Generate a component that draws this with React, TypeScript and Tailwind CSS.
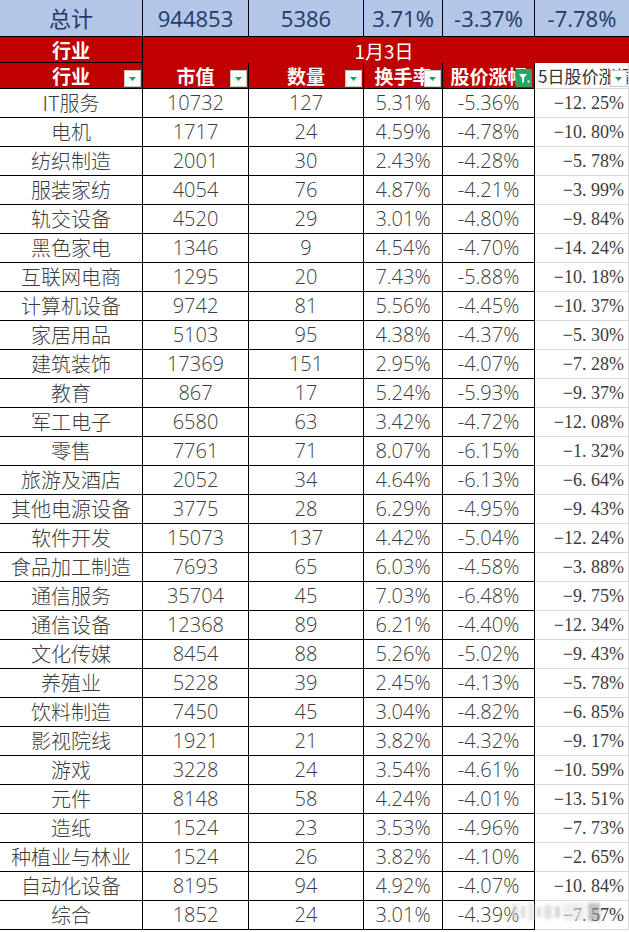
import React from "react";

type Row = [string, string, string, string, string, string];

const rows: Row[] = [
  ["IT服务", "10732", "127", "5.31%", "-5.36%", "−12. 25%"],
  ["电机", "1717", "24", "4.59%", "-4.78%", "−10. 80%"],
  ["纺织制造", "2001", "30", "2.43%", "-4.28%", "−5. 78%"],
  ["服装家纺", "4054", "76", "4.87%", "-4.21%", "−3. 99%"],
  ["轨交设备", "4520", "29", "3.01%", "-4.80%", "−9. 84%"],
  ["黑色家电", "1346", "9", "4.54%", "-4.70%", "−14. 24%"],
  ["互联网电商", "1295", "20", "7.43%", "-5.88%", "−10. 18%"],
  ["计算机设备", "9742", "81", "5.56%", "-4.45%", "−10. 37%"],
  ["家居用品", "5103", "95", "4.38%", "-4.37%", "−5. 30%"],
  ["建筑装饰", "17369", "151", "2.95%", "-4.07%", "−7. 28%"],
  ["教育", "867", "17", "5.24%", "-5.93%", "−9. 37%"],
  ["军工电子", "6580", "63", "3.42%", "-4.72%", "−12. 08%"],
  ["零售", "7761", "71", "8.07%", "-6.15%", "−1. 32%"],
  ["旅游及酒店", "2052", "34", "4.64%", "-6.13%", "−6. 64%"],
  ["其他电源设备", "3775", "28", "6.29%", "-4.95%", "−9. 43%"],
  ["软件开发", "15073", "137", "4.42%", "-5.04%", "−12. 24%"],
  ["食品加工制造", "7693", "65", "6.03%", "-4.58%", "−3. 88%"],
  ["通信服务", "35704", "45", "7.03%", "-6.48%", "−9. 75%"],
  ["通信设备", "12368", "89", "6.21%", "-4.40%", "−12. 34%"],
  ["文化传媒", "8454", "88", "5.26%", "-5.02%", "−9. 43%"],
  ["养殖业", "5228", "39", "2.45%", "-4.13%", "−5. 78%"],
  ["饮料制造", "7450", "45", "3.04%", "-4.82%", "−6. 85%"],
  ["影视院线", "1921", "21", "3.82%", "-4.32%", "−9. 17%"],
  ["游戏", "3228", "24", "3.54%", "-4.61%", "−10. 59%"],
  ["元件", "8148", "58", "4.24%", "-4.01%", "−13. 51%"],
  ["造纸", "1524", "23", "3.53%", "-4.96%", "−7. 73%"],
  ["种植业与林业", "1524", "26", "3.82%", "-4.10%", "−2. 65%"],
  ["自动化设备", "8195", "94", "4.92%", "-4.07%", "−10. 84%"],
  ["综合", "1852", "24", "3.01%", "-4.39%", "−7. 57%"],
];

function FilterBtn() {
  return (
    <div className="absolute right-[1px] bottom-[1px] w-[17px] h-[17px] bg-white border border-[#c8c8c8] flex items-center justify-center">
      <svg width="9" height="6" viewBox="0 0 9 6">
        <polygon points="1,1 8,1 4.5,5" fill="#1f9f63" />
      </svg>
    </div>
  );
}

function ActiveFilterBtn() {
  return (
    <div className="absolute right-[2px] bottom-[1px] w-[16px] h-[18px] bg-[#2aa465] flex items-center justify-center">
      <svg width="12" height="12" viewBox="0 0 12 12">
        <polygon points="1,2 9,2 6,6 6,10 4,11 4,6" fill="#ffffff" />
        <rect x="9.5" y="8.5" width="2" height="2" fill="#ffffff" />
      </svg>
    </div>
  );
}

export default function App() {
  const headers = ["行业", "市值", "数量", "换手率", "股价涨幅"];
  return (
    <div className="w-[629px] h-[932px] bg-white overflow-hidden relative">
      <div className="grid grid-cols-[143px_106px_115px_79px_92px_94px]">
        {["总计", "944853", "5386", "3.71%", "-3.37%", "-7.78%"].map((t, i) => (
          <div
            key={"t" + i}
            className={`h-[37px] bg-[#b4c6e7] border-b border-black ${i < 5 ? "border-r" : ""} flex items-center justify-center leading-none text-[22px] text-[#1f3a68] font-['Open_Sans','Noto_Sans_CJK_SC',sans-serif]`}
          >
            {t}
          </div>
        ))}

        <div className="h-[26px] bg-[#c00000] border-r border-b border-black flex items-center justify-center leading-none text-white font-bold text-[19px] font-['Noto_Sans_CJK_SC',sans-serif]">
          行业
        </div>
        <div className="col-span-5 h-[26px] bg-[#c00000] flex items-center justify-center leading-none text-white text-[19px] pr-[4px] font-['Noto_Sans_CJK_SC',sans-serif]">
          1月3日
        </div>

        {headers.map((h, i) => (
          <div
            key={"h" + i}
            className="relative h-[26px] bg-[#c00000] border-r border-b border-black flex items-center justify-center leading-none text-white font-bold text-[19px] overflow-hidden font-['Noto_Sans_CJK_SC',sans-serif]"
          >
            <span className="whitespace-nowrap">{h}</span>
            {i === 4 ? <ActiveFilterBtn /> : <FilterBtn />}
          </div>
        ))}
        <div className="relative h-[26px] bg-white border-b border-r border-[#d6d6d6] flex items-center leading-none pl-[3px] text-[17px] text-[#333333] overflow-hidden font-['Noto_Sans_CJK_SC',sans-serif]">
          <span className="whitespace-nowrap">5日股价涨幅</span>
          <FilterBtn />
        </div>

        {rows.map((r, ri) =>
          r.map((c, ci) =>
            ci === 0 ? (
              <div
                key={ri + "-" + ci}
                className="h-[29px] border-r border-b border-black flex items-center justify-center leading-none text-[20px] text-[#3c3c3c] font-light whitespace-nowrap font-['Noto_Sans_CJK_SC',sans-serif]"
              >
                {c}
              </div>
            ) : ci < 5 ? (
              <div
                key={ri + "-" + ci}
                className="h-[29px] border-r border-b border-black flex items-center justify-center leading-none text-[20px] text-[#3c3c3c] font-light whitespace-nowrap font-['Open_Sans','Noto_Sans_CJK_SC',sans-serif]"
              >
                {c}
              </div>
            ) : (
              <div
                key={ri + "-" + ci}
                className="h-[29px] border-r border-b border-[#dadada] flex items-center justify-end leading-none pr-[4px] text-[18px] text-[#3a3a3a] whitespace-pre font-['Liberation_Serif','Noto_Sans_CJK_SC',serif]"
              >
                {c}
              </div>
            )
          )
        )}
      </div>

      <div className="absolute left-[512px] top-[900px] w-[110px] h-[24px] flex items-center gap-[3px] blur-[1.5px] opacity-60 pointer-events-none">
        <div className="w-[6px] h-[16px] bg-[#cfcfcf]" />
        <div className="w-[4px] h-[12px] bg-[#bdbdbd]" />
        <div className="w-[6px] h-[16px] bg-[#d8d8d8]" />
        <div className="w-[4px] h-[10px] bg-[#c4c4c4]" />
        <div className="w-[8px] h-[14px] bg-[#d0d0d0]" />
        <div className="w-[5px] h-[12px] bg-[#bcbcbc]" />
        <div className="w-[22px] h-[18px] bg-[#e4e4e4]" />
        <div className="w-[12px] h-[18px] bg-[#9a9a9a]" />
      </div>
    </div>
  );
}
